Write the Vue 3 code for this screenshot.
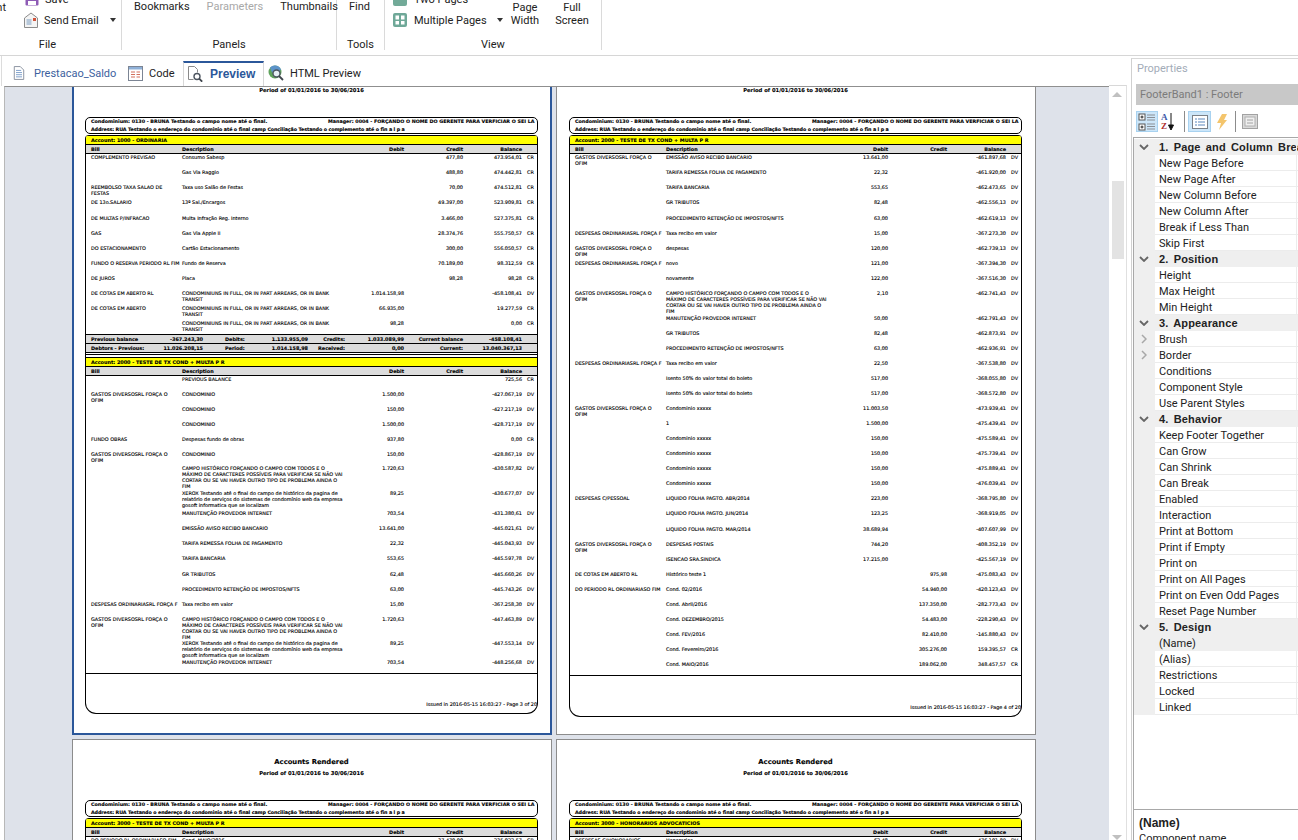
<template>
  <div class="app">
    <!-- ribbon, its upper part is cut off by the window -->
    <header class="ribbon">
      <section class="group group--file">
        <div class="group-body file-body">
          <span class="cut-print">Print</span>
          <div class="file-rows">
            <div class="tool tool--cut">
              <svg class="ico" viewBox="0 0 14 14"><rect x="0.5" y="0.5" width="13" height="13" rx="1" fill="#8e5bb5" /><rect x="3" y="9" width="8" height="4" fill="#fff" /></svg>
              <span>Save</span>
            </div>
            <div class="tool">
              <svg class="ico ico--mail" viewBox="0 0 16 16">
                <path d="M1.5 6 8 1l6.5 5v9.5h-13z" fill="#f4f4f4" stroke="#8c8c8c" />
                <path d="M3.5 8h5M3.5 10h5M3.5 12h5" stroke="#7a9cc0" />
                <rect x="10" y="6" width="3" height="3" fill="#d0523a" />
              </svg>
              <span>Send Email</span>
              <i class="caret"></i>
            </div>
          </div>
        </div>
        <div class="group-label">File</div>
      </section>

      <section class="group group--panels">
        <div class="group-body panel-tools">
          <span>Bookmarks</span>
          <span class="muted">Parameters</span>
          <span>Thumbnails</span>
        </div>
        <div class="group-label">Panels</div>
      </section>

      <section class="group group--tools">
        <div class="group-body panel-tools"><span>Find</span></div>
        <div class="group-label">Tools</div>
      </section>

      <section class="group group--view">
        <div class="group-body view-body">
          <div class="view-rows">
            <div class="tool tool--cut">
              <svg class="ico" viewBox="0 0 14 14"><rect width="14" height="14" rx="2" fill="#72aa98" /></svg>
              <span>Two Pages</span>
            </div>
            <div class="tool">
              <svg class="ico" viewBox="0 0 14 14">
                <rect width="14" height="14" rx="2" fill="#6fa898" />
                <path d="M2.5 2.5h3.5v4h-3.5zM8 2.5h3.5v4H8zM2.5 8H6v3.5H2.5zM8 8h3.5v3.5H8z" fill="#fff" />
              </svg>
              <span>Multiple Pages</span>
              <i class="caret caret--view"></i>
            </div>
          </div>
          <div class="stack stack--page">Page<br />Width</div>
          <div class="stack stack--full">Full<br />Screen</div>
        </div>
        <div class="group-label">View</div>
      </section>
    </header>

    <div class="workspace">
      <main class="main">
        <nav class="tabs">
          <div class="tab tab--file">
            <svg class="tab-ico" viewBox="0 0 14 16">
              <path d="M1.5.5h7l4 4v11h-11z" fill="#fff" stroke="#7c8594" />
              <path d="M3.5 5h6M3.5 7.5h7M3.5 10h7M3.5 12.5h7" stroke="#6d93c4" />
            </svg>
            <span>Prestacao_Saldo</span>
          </div>
          <div class="tab tab--code">
            <svg class="tab-ico tab-ico--code" viewBox="0 0 15 15">
              <rect x="0.5" y="0.5" width="14" height="14" fill="#fff" stroke="#7c8594" />
              <rect x="1" y="1" width="13" height="2.5" fill="#8eb0d8" />
              <path d="M3 6h4M8.5 6H12M3 8.500h4M8.500 8.500H12M3 11h4M8.500 11H12" stroke="#d2705c" />
            </svg>
            <span>Code</span>
          </div>
          <div class="tab tab--active">
            <svg class="tab-ico tab-ico--preview" viewBox="0 0 16 16">
              <path d="M1.500.5h6l3 3v3" fill="#fff" stroke="#8a8a8a" />
              <path d="M1.500.5v13h5" fill="none" stroke="#8a8a8a" />
              <circle cx="10" cy="10.500" r="3" fill="#fff" stroke="#4d5560" stroke-width="1.400" />
              <path d="m12.200 12.700 3 3" stroke="#3f454d" stroke-width="1.800" />
            </svg>
            <span>Preview</span>
          </div>
          <div class="tab tab--html">
            <svg class="tab-ico tab-ico--html" viewBox="0 0 16 16">
              <circle cx="7" cy="7" r="6.500" fill="#5fa35c" />
              <path d="M7 .5a6.500 6.500 0 0 1 6 4l-4 4-5-1-2-5A6.500 6.500 0 0 1 7 .5z" fill="#5c93c9" />
              <circle cx="8.500" cy="8.500" r="3.500" fill="#e6eef6" stroke="#4d5560" stroke-width="1.400" />
              <path d="m11 11 4 4" stroke="#3f454d" stroke-width="1.800" />
            </svg>
            <span>HTML Preview</span>
          </div>
        </nav>

        <div class="viewer">
          <div class="viewer-canvas">
            <div class="pages">
              <article
                v-for="page in pages"
                :key="page.no"
                class="page"
                :class="{ 'page--selected': page.selected }"
              >
                <div class="page-title">Accounts Rendered</div>
                <div class="page-period">Period of 01/01/2016 to 30/06/2016</div>

                <div class="info-box">
                  <div class="info-line">
                    <span class="info-cond">Condominium: 0130 - BRUNA Testando o campo nome até o final.</span>
                    <span class="info-manager">Manager: 0004 - FORÇANDO O NOME DO GERENTE PARA VERFICIAR O SEI LA</span>
                  </div>
                  <div class="info-line info-line--address">Address: RUA Testando o endereço do condominio até o final camp Conciliação Testando o complemento até o fin a l p a</div>
                </div>

                <div class="frame" :style="{ height: page.frameHeight + 'px' }">
                  <template v-for="(section, si) in page.sections" :key="si">
                    <div v-if="si > 0" class="section-rule"></div>
                    <div class="account">Account: {{ section.account }}</div>
                    <div class="grid-row grid-head">
                      <span>Bill</span>
                      <span>Description</span>
                      <span class="num">Debit</span>
                      <span class="num">Credit</span>
                      <span class="num">Balance</span>
                      <span></span>
                    </div>
                    <div
                      v-for="(row, ri) in section.rows"
                      :key="ri"
                      class="grid-row"
                      :style="{ height: (row[6] || 15) + 'px' }"
                    >
                      <span>{{ row[0] }}</span>
                      <span>{{ row[1] }}</span>
                      <span class="num">{{ row[2] }}</span>
                      <span class="num">{{ row[3] }}</span>
                      <span class="num">{{ row[4] }}</span>
                      <span class="sign">{{ row[5] }}</span>
                    </div>
                    <div v-if="section.summary" class="summary">
                      <div v-for="(line, li) in section.summary" :key="li" class="summary-line">
                        <span>{{ line[0] }}</span>
                        <span class="num">{{ line[1] }}</span>
                        <span class="summary-label">{{ line[2] }}</span>
                        <span class="num">{{ line[3] }}</span>
                        <span class="num">{{ line[4] }}</span>
                        <span class="num">{{ line[5] }}</span>
                        <span class="num">{{ line[6] }}</span>
                        <span class="num">{{ line[7] }}</span>
                      </div>
                    </div>
                  </template>
                  <div class="frame-footer">Issued in 2016-05-15 16:03:27 - Page {{ page.no }} of 20</div>
                </div>
              </article>
            </div>
          </div>
          <div class="scrollbar">
            <i class="arrow arrow--up"></i>
            <div class="thumb"></div>
            <i class="arrow arrow--down"></i>
          </div>
        </div>
      </main>

      <!-- properties panel -->
      <aside class="props">
        <div class="props-title">Properties</div>
        <div class="props-object">FooterBand1 : Footer</div>
        <div class="props-toolbar">
          <button class="tb tb--cat">
            <svg viewBox="0 0 20 20" width="20" height="20">
              <rect x="2" y="2" width="6" height="6" fill="#fff" stroke="#555" />
              <rect x="2" y="12" width="6" height="6" fill="#fff" stroke="#555" />
              <path d="M3.500 5h3M5 3.500v3M3.500 15h3M5 13.500v3" stroke="#222" />
              <path d="M10 3h8M10 5.500h8M10 8h8M10 12h8M10 14.500h8M10 17h8" stroke="#8a8f96" />
            </svg>
          </button>
          <div class="tb-az">
            <span class="az"><b class="az-a">A</b><b class="az-z">Z</b></span>
            <svg viewBox="0 0 6 18" width="6" height="18"><path d="M3 0v15M.5 12 3 17l2.500-5z" stroke="#111" fill="#111" /></svg>
          </div>
          <i class="tb-sep"></i>
          <button class="tb tb--list">
            <svg viewBox="0 0 16 14" width="16" height="14">
              <rect x="0.500" y="0.500" width="15" height="13" fill="#fff" stroke="#7a8088" />
              <path d="M3 4h2M6 4h7M3 7h2M6 7h7M3 10h2M6 10h7" stroke="#5a87bd" />
            </svg>
          </button>
          <svg class="tb-bolt" viewBox="0 0 12 16" width="12" height="16"><path d="M6 0h5L8 6h3l-8 10 2-7H1z" fill="#f4c56c" /></svg>
          <i class="tb-sep tb-sep--2"></i>
          <svg class="tb-events" viewBox="0 0 16 15" width="16" height="15">
            <rect x="0.500" y="0.500" width="15" height="14" fill="#d9d9d9" stroke="#a2a2a2" />
            <rect x="3" y="3" width="10" height="9" fill="#efefef" stroke="#b0b0b0" />
            <path d="M5 6h6M5 9h6" stroke="#a2a2a2" />
          </svg>
        </div>

        <div class="props-grid">
          <div
            v-for="item in propRows"
            :key="item.label"
            class="prop"
            :class="{ 'prop--cat': item.cat, 'prop--selected': item.label === '(Name)' }"
          >
            <div class="prop-gutter">
              <svg v-if="item.cat" viewBox="0 0 10 6" width="10" height="6"><path d="M1 1l4 4 4-4" fill="none" stroke="#666" stroke-width="1.800" /></svg>
              <svg v-else-if="item.more" viewBox="0 0 6 10" width="6" height="10"><path d="M1 1l4 4-4 4" fill="none" stroke="#a8a8a8" stroke-width="1.500" /></svg>
            </div>
            <div class="prop-name">{{ item.label }}</div>
            <div class="prop-value"></div>
          </div>
        </div>

        <div class="props-help">
          <b>(Name)</b>
          <div>Component name</div>
        </div>
      </aside>
    </div>
  </div>
</template>

<script setup>
const BILL_GASTOS = 'GASTOS DIVERSOSRL FORÇA O\nOFIM'
const BILL_DESP = 'DESPESAS ORDINARIASRL FORÇA F'
const CAMPO = 'CAMPO HISTÓRICO FORÇANDO O CAMPO COM TODOS E O\nMÁXIMO DE CARACTERES POSSÍVEIS PARA VERIFICAR SE NÃO VAI\nCORTAR OU SE VAI HAVER OUTRO TIPO DE PROBLEMA AINDA O\nFIM'
const XEROX = 'XEROX Testando até o final do campo de histórico da pagina de\nrelatório de serviços do sistemas de condomínio web da empresa\ngosoft informatica que se localizam'
const COND_IN = 'CONDOMINIUNS IN FULL, OR IN PART ARREARS, OR IN BANK\nTRANSIT'
const MANUT = 'MANUTENÇÃO PROVEDOR INTERNET'
const PROC = 'PROCEDIMENTO RETENÇÃO DE IMPOSTOS/NFTS'
const TAXA = 'Taxa recibo em valor'
const ISENTO = 'Isento 50% do valor total do boleto'
const XXXX = 'Condominio xxxxx'

// [bill, description, debit, credit, balance, sign, row height]
const pages = [
  {
    no: 3,
    selected: true,
    frameHeight: 579,
    sections: [
      {
        account: '1000 - ORDINARIA',
        rows: [
          ['COMPLEMENTO PREVISAO', 'Consumo Sabesp', '', '477,80', '473.954,01', 'CR'],
          ['', 'Gas Via Raggio', '', '488,80', '474.442,81', 'CR'],
          ['REEMBOLSO TAXA SALAO DE\nFESTAS', 'Taxa uso Salão de Festas', '', '70,00', '474.512,81', 'CR'],
          ['DE 13o.SALARIO', '13º Sal./Encargos', '', '49.397,00', '523.909,81', 'CR', 16],
          ['DE MULTAS P/INFRACAO', 'Multa Infração Reg. Interno', '', '3.466,00', '527.375,81', 'CR'],
          ['GAS', 'Gas Via Apple II', '', '28.374,76', '555.750,57', 'CR'],
          ['DO ESTACIONAMENTO', 'Cartão Estacionamento', '', '300,00', '556.050,57', 'CR'],
          ['FUNDO O RESERVA PERIODO RL FIM', 'Fundo de Reserva', '', '70.189,00', '98.312,59', 'CR'],
          ['DE JUROS', 'Placa', '', '98,28', '98,28', 'CR'],
          ['DE COTAS EM ABERTO RL', COND_IN, '1.014.158,98', '', '-458.108,41', 'DV'],
          ['DE COTAS EM ABERTO', COND_IN, '66.935,00', '', '19.277,59', 'CR'],
          ['', COND_IN, '98,28', '', '0,00', 'CR', 14]
        ],
        summary: [
          ['Previous balance', '-367.243,30', 'Debits:', '1.133.955,09', 'Credits:', '1.033.089,99', 'Current balance', '-458.108,41'],
          ['Debtors - Previous:', '11.026.208,15', 'Period:', '1.014.158,98', 'Received:', '0,00', 'Current:', '13.040.367,13']
        ]
      },
      {
        account: '2000 - TESTE DE TX COND + MULTA P R',
        rows: [
          ['', 'PREVIOUS BALANCE', '', '', '725,56', 'CR'],
          [BILL_GASTOS, 'CONDOMINIO', '1.500,00', '', '-427.067,19', 'DV'],
          ['', 'CONDOMINIO', '150,00', '', '-427.217,19', 'DV'],
          ['', 'CONDOMINIO', '1.500,00', '', '-428.717,19', 'DV'],
          ['FUNDO OBRAS', 'Despesas fundo de obras', '937,80', '', '0,00', 'CR'],
          [BILL_GASTOS, 'CONDOMINIO', '150,00', '', '-428.867,19', 'DV', 14],
          ['', CAMPO, '1.720,63', '', '-430.587,82', 'DV', 25],
          ['', XEROX, '89,25', '', '-430.677,07', 'DV', 20],
          ['', MANUT, '703,54', '', '-431.380,61', 'DV'],
          ['', 'EMISSÃO AVISO RECIBO BANCARIO', '13.641,00', '', '-445.021,61', 'DV'],
          ['', 'TARIFA REMESSA FOLHA DE PAGAMENTO', '22,32', '', '-445.043,93', 'DV'],
          ['', 'TARIFA BANCARIA', '553,65', '', '-445.597,78', 'DV', 16],
          ['', 'GR TRIBUTOS', '62,48', '', '-445.660,26', 'DV'],
          ['', PROC, '63,00', '', '-445.743,26', 'DV'],
          [BILL_DESP, TAXA, '15,00', '', '-367.258,30', 'DV'],
          [BILL_GASTOS, CAMPO, '1.720,63', '', '-447.463,89', 'DV', 24],
          ['', XEROX, '89,25', '', '-447.553,14', 'DV', 19],
          ['', MANUT, '703,54', '', '-448.256,68', 'DV', 14]
        ]
      }
    ]
  },
  {
    no: 4,
    frameHeight: 582,
    sections: [
      {
        account: '2000 - TESTE DE TX COND + MULTA P R',
        rows: [
          [BILL_GASTOS, 'EMISSÃO AVISO RECIBO BANCARIO', '13.641,00', '', '-461.897,68', 'DV'],
          ['', 'TARIFA REMESSA FOLHA DE PAGAMENTO', '22,32', '', '-461.920,00', 'DV'],
          ['', 'TARIFA BANCARIA', '553,65', '', '-462.473,65', 'DV'],
          ['', 'GR TRIBUTOS', '82,48', '', '-462.556,13', 'DV', 16],
          ['', PROC, '63,00', '', '-462.619,13', 'DV'],
          [BILL_DESP, TAXA, '15,00', '', '-367.273,30', 'DV'],
          [BILL_GASTOS, 'despesas', '120,00', '', '-462.739,13', 'DV'],
          [BILL_DESP, 'novo', '121,00', '', '-367.394,30', 'DV'],
          ['', 'novamente', '122,00', '', '-367.516,30', 'DV'],
          [BILL_GASTOS, CAMPO, '2,10', '', '-462.741,43', 'DV', 25],
          ['', MANUT, '50,00', '', '-462.791,43', 'DV'],
          ['', 'GR TRIBUTOS', '82,48', '', '-462.873,91', 'DV'],
          ['', PROC, '63,00', '', '-462.936,91', 'DV'],
          [BILL_DESP, TAXA, '22,50', '', '-367.538,80', 'DV'],
          ['', ISENTO, '517,00', '', '-368.055,80', 'DV'],
          ['', ISENTO, '517,00', '', '-368.572,80', 'DV'],
          [BILL_GASTOS, XXXX, '11.003,50', '', '-473.939,41', 'DV'],
          ['', '1', '1.500,00', '', '-475.439,41', 'DV'],
          ['', XXXX, '150,00', '', '-475.589,41', 'DV'],
          ['', XXXX, '150,00', '', '-475.739,41', 'DV'],
          ['', XXXX, '150,00', '', '-475.889,41', 'DV'],
          ['', XXXX, '150,00', '', '-476.039,41', 'DV'],
          ['DESPESAS C/PESSOAL', 'LIQUIDO FOLHA PAGTO. ABR/2014', '223,00', '', '-368.795,80', 'DV'],
          ['', 'LIQUIDO FOLHA PAGTO. JUN/2014', '123,25', '', '-368.919,05', 'DV', 16],
          ['', 'LIQUIDO FOLHA PAGTO. MAR/2014', '38.689,94', '', '-407.607,99', 'DV'],
          [BILL_GASTOS, 'DESPESAS POSTAIS', '744,20', '', '-408.352,19', 'DV'],
          ['', 'ISENCAO SRA.SINDICA', '17.215,00', '', '-425.567,19', 'DV'],
          ['DE COTAS EM ABERTO RL', 'Histórico teste 1', '', '975,98', '-475.083,43', 'DV'],
          ['DO PERIODO RL ORDINARIASO FIM', 'Cond. 02/2016', '', '54.940,00', '-420.123,43', 'DV'],
          ['', 'Cond. Abril/2016', '', '137.350,00', '-282.773,43', 'DV'],
          ['', 'Cond. DEZEMBRO/2015', '', '54.483,00', '-228.290,43', 'DV'],
          ['', 'Cond. FEV/2016', '', '82.410,00', '-145.880,43', 'DV'],
          ['', 'Cond. Fevereiro/2016', '', '305.276,00', '159.395,57', 'CR'],
          ['', 'Cond. MAIO/2016', '', '189.062,00', '348.457,57', 'CR', 14]
        ]
      }
    ]
  },
  {
    no: 5,
    frameHeight: 579,
    sections: [
      {
        account: '3000 - TESTE DE TX COND + MULTA P R',
        rows: [['DO PERIODO RL ORDINARIASO FIM', 'Cond. MAIO/2016', '', '37.470,00', '235.022,57', 'CR']]
      }
    ]
  },
  {
    no: 6,
    frameHeight: 579,
    sections: [
      {
        account: '3000 - HONORARIOS ADVOCATICIOS',
        rows: [['DESPESAS C/HONORARIOS', 'Honorarios', '62,48', '', '-476.101,89', 'DV']]
      }
    ]
  }
]

const cat = (label) => ({ label, cat: true })
const item = (label, more = false) => ({ label, more })

const propRows = [
  cat('1. Page and Column Break'),
  ...['New Page Before', 'New Page After', 'New Column Before', 'New Column After', 'Break if Less Than', 'Skip First'].map((l) => item(l)),
  cat('2. Position'),
  ...['Height', 'Max Height', 'Min Height'].map((l) => item(l)),
  cat('3. Appearance'),
  item('Brush', true),
  item('Border', true),
  ...['Conditions', 'Component Style', 'Use Parent Styles'].map((l) => item(l)),
  cat('4. Behavior'),
  ...['Keep Footer Together', 'Can Grow', 'Can Shrink', 'Can Break', 'Enabled', 'Interaction', 'Print at Bottom', 'Print if Empty', 'Print on', 'Print on All Pages', 'Print on Even Odd Pages', 'Reset Page Number'].map((l) => item(l)),
  cat('5. Design'),
  ...['(Name)', '(Alias)', 'Restrictions', 'Locked', 'Linked'].map((l) => item(l))
]
</script>

<style>
html,
body {
  margin: 0;
  background: #fff;
}
</style>

<style scoped>
.app {
  width: 1298px;
  height: 840px;
  overflow: hidden;
  display: flex;
  flex-direction: column;
  font-family: Roboto, "Liberation Sans", Arial, sans-serif;
  font-size: 11px;
  color: #222;
  background: #fff;
}

/* ribbon */
.ribbon {
  height: 55px;
  flex: none;
  display: flex;
  border-bottom: 1px solid #d6d6d6;
}
.group {
  height: 50px;
  flex: none;
  box-sizing: border-box;
  border-right: 1px solid #dadada;
  display: flex;
  flex-direction: column;
}
/* the File group starts left of the window */
.group--file { width: 148px; margin-left: -26px; }
.group--panels { width: 215px; }
.group--tools { width: 48px; }
.group--view { width: 217px; }
.group-body { flex: 1; min-height: 0; }
.group-label {
  height: 13px;
  line-height: 13px;
  text-align: center;
  position: relative;
  top: 1px;
}
.file-body { display: flex; }
.cut-print {
  width: 50px;
  flex: none;
  box-sizing: border-box;
  padding: 1px 0 0 9px;
  line-height: 14px;
}
.file-rows,
.view-rows {
  display: flex;
  flex-direction: column;
  gap: 5px;
  margin-top: -9px;
}
.tool {
  display: flex;
  align-items: center;
  height: 16px;
  gap: 5px;
  white-space: nowrap;
}
.ico { width: 14px; height: 14px; flex: none; }
.ico--mail { width: 16px; height: 16px; margin-left: -1px; }
.file-rows .tool--cut { padding-left: 1px; gap: 6px; }
.caret {
  display: block;
  width: 0;
  height: 0;
  margin-left: 6px;
  border-left: 3.5px solid transparent;
  border-right: 3.5px solid transparent;
  border-top: 4px solid #333;
}
.caret--view { margin-left: 3px; }
.panel-tools {
  display: flex;
  gap: 17px;
  padding: 0 12px;
  line-height: 14px;
}
.muted { color: #a8a8a8; }
.view-body { display: flex; padding-left: 8px; }
.view-rows { width: 112px; flex: none; }
.view-rows .tool { gap: 7px; }
.stack {
  text-align: center;
  line-height: 13px;
  padding-top: 1px;
}
.stack--page { margin-left: 5px; width: 30px; }
.stack--full { margin-left: 12px; width: 40px; }

/* workspace */
.workspace {
  flex: 1;
  min-height: 0;
  display: flex;
}
.main {
  width: 1131px;
  flex: none;
  display: flex;
  flex-direction: column;
}
.tabs {
  height: 30px;
  flex: none;
  display: flex;
  align-items: flex-end;
  border-left: 1px solid #dcdcdc;
  margin-left: 1px;
  box-sizing: border-box;
}
.tab {
  height: 25px;
  display: flex;
  align-items: center;
  box-sizing: border-box;
  padding-bottom: 1px;
  white-space: nowrap;
}
.tab-ico { width: 12px; height: 16px; flex: none; }
.tab--file { width: 126px; padding-left: 11px; gap: 9px; color: #3d5f9e; }
.tab--code { width: 55px; gap: 6px; }
.tab-ico--code { width: 15px; height: 15px; }
.tab--active {
  width: 81px;
  border-top: 2px solid #2b579a;
  border-left: 1px solid #d8d8d8;
  border-right: 1px solid #d8d8d8;
  padding-left: 3px;
  padding-bottom: 2px;
  gap: 7px;
  color: #2b579a;
  font-family: "Liberation Sans", Arial, sans-serif;
  font-size: 12px;
  font-weight: 700;
}
.tab-ico--preview { width: 16px; height: 16px; }
.tab--html { padding-left: 4px; gap: 6px; }
.tab-ico--html { width: 16px; height: 16px; }

.viewer {
  flex: 1;
  min-height: 0;
  display: flex;
}
.viewer-canvas {
  width: 1105px;
  margin-left: 4px;
  flex: none;
  overflow: hidden;
  background: #dee2ea;
  border-top: 1px solid #8f8f8f;
  border-left: 1px solid #b8b8b8;
  box-sizing: border-box;
}
.pages {
  display: grid;
  grid-template-columns: 480px 480px;
  gap: 4px;
  margin: -31px 0 0 67px;
}

/* one report page */
.page {
  height: 679px;
  box-sizing: border-box;
  background: #fff;
  outline: 1px solid #8c8c8c;
  outline-offset: -1px;
  padding: 18px 14px 0 13px;
  font-family: "DejaVu Sans", Verdana, sans-serif;
  font-size: 4.9px;
  line-height: 6px;
  color: #000;
  -webkit-text-stroke: 0.12px #000;
}
.page--selected {
  outline: 2px solid #2b579a;
  outline-offset: -2px;
}
.page-title {
  font-size: 6.8px;
  line-height: 10px;
  font-weight: 700;
  text-align: center;
}
.page-period {
  margin-top: 3px;
  font-size: 5.25px;
  line-height: 7px;
  font-weight: 700;
  text-align: center;
}
.info-box {
  margin-top: 23px;
  height: 17px;
  box-sizing: border-box;
  border: 1px solid #000;
  border-radius: 5px;
  padding: 0 0 0 5px;
  font-weight: 700;
  font-size: 4.8px;
  line-height: 8px;
  overflow: hidden;
  white-space: nowrap;
}
.info-line { display: flex; height: 8px; }
.info-line--address { letter-spacing: -0.1px; }
.info-cond { width: 237px; flex: none; }
.info-manager { flex: none; }

.frame {
  margin-top: 1px;
  box-sizing: border-box;
  border: 1px solid #000;
  border-top: 0;
  border-radius: 4px 4px 11px 11px;
  display: flex;
  flex-direction: column;
  overflow: hidden;
}
.account {
  height: 9px;
  flex: none;
  box-sizing: border-box;
  background: #ffff00;
  border-top: 1px solid #000;
  padding-left: 5px;
  font-weight: 700;
  line-height: 8px;
}
.section-rule {
  height: 1px;
  flex: none;
  margin: 1px 0 2px;
  background: #000;
}
.grid-row {
  flex: none;
  display: grid;
  grid-template-columns: 91px 158px 64px 59px 59px 14px;
  padding-left: 5px;
  white-space: pre;
  box-sizing: border-box;
  overflow: hidden;
}
.grid-head {
  height: 10px;
  background: #dcdcdc;
  border-top: 1px solid #000;
  border-bottom: 1px solid #000;
  font-weight: 700;
  line-height: 8px;
}
.num { text-align: right; }
.sign { padding-left: 5px; }

.summary {
  flex: none;
  border-top: 1px solid #000;
  border-bottom: 1px solid #000;
  background: #dcdcdc;
  font-weight: 700;
}
.summary-line {
  display: grid;
  grid-template-columns: 59px 53px 57px 48px 37px 59px 59px 59px;
  height: 8px;
  box-sizing: border-box;
  padding-left: 5px;
  line-height: 8px;
  white-space: nowrap;
}
.summary-line + .summary-line {
  height: 9px;
  border-top: 1px solid #000;
}
.summary-label { padding-left: 22px; }

.frame-footer {
  flex: 1;
  min-height: 0;
  border-top: 1px solid #000;
  white-space: nowrap;
  padding-bottom: 6px;
  display: flex;
  align-items: flex-end;
  justify-content: flex-end;
}

/* scrollbar next to the pages */
.scrollbar {
  width: 18px;
  flex: none;
  box-sizing: border-box;
  border-top: 1px solid #d8d8d8;
  border-right: 1px solid #e0e0e0;
  margin-top: -1px;
  position: relative;
  padding-left: 3px;
}
.thumb {
  width: 12px;
  height: 78px;
  margin-top: 95px;
  background: #e3e3e3;
}
.arrow {
  position: absolute;
  left: 3px;
  width: 0;
  height: 0;
  border-left: 5px solid transparent;
  border-right: 5px solid transparent;
}
.arrow--up { top: 6px; border-bottom: 5px solid #c0c0c0; }
.arrow--down { bottom: 0; border-top: 5px solid #c0c0c0; }

/* properties */
.props {
  flex: 1;
  min-width: 0;
  margin-top: 2px;
  border-top: 1px solid #d8d8d8;
  border-left: 1px solid #d0d0d0;
  box-sizing: border-box;
  display: flex;
  flex-direction: column;
  overflow: hidden;
}
.props-title {
  height: 25px;
  line-height: 19px;
  padding-left: 5px;
  flex: none;
  color: #a3acb8;
}
.props-object {
  height: 21px;
  flex: none;
  margin-left: 4px;
  background: #c8c8c8;
  color: #7b7b7b;
  line-height: 22px;
  padding-left: 4px;
  white-space: nowrap;
}
.props-toolbar {
  height: 32px;
  flex: none;
  display: flex;
  align-items: center;
  padding: 1px 0 0 4px;
  box-sizing: border-box;
}
.tb {
  padding: 0;
  margin: 0;
  border: 1px solid #a8d2f0;
  background: #cce6f9;
  display: flex;
  align-items: center;
  justify-content: center;
  height: 21px;
  box-sizing: border-box;
}
.tb--cat { width: 22px; }
.tb--list { width: 23px; margin-left: 3px; }
.tb-az {
  display: flex;
  align-items: center;
  margin-left: 3px;
  width: 19px;
}
.az {
  display: flex;
  flex-direction: column;
  font-size: 9px;
  line-height: 9px;
  font-family: "Liberation Serif", serif;
}
.az-a { color: #3a57a8; }
.az-z { color: #b03030; }
.tb-sep {
  width: 1px;
  height: 21px;
  background: #8c8c8c;
  margin-left: 4px;
}
.tb-bolt { margin-left: 5px; }
.tb-sep--2 { margin-left: 7px; }
.tb-events { margin-left: 6px; }

.props-grid {
  flex: 1;
  min-height: 0;
  margin-left: 1px;
  border-top: 1px solid #a8a8a8;
  border-left: 1px solid #a8a8a8;
  border-bottom: 1px solid #a8a8a8;
  padding-top: 1px;
  overflow: hidden;
}
.prop {
  height: 16px;
  display: flex;
  white-space: nowrap;
  box-sizing: border-box;
}
.prop-gutter {
  width: 21px;
  flex: none;
  background: #efefef;
  display: flex;
  align-items: center;
  justify-content: center;
  padding-right: 2px;
  box-sizing: border-box;
}
.prop-name {
  width: 141px;
  flex: none;
  padding-left: 4px;
  box-sizing: border-box;
  line-height: 18px;
  border-bottom: 1px solid #ececec;
  overflow: hidden;
}
.prop-value {
  flex: 1;
  border-left: 1px solid #ececec;
  border-bottom: 1px solid #ececec;
}
.prop--cat { background: #efefef; }
.prop--cat .prop-name,
.prop--cat .prop-value {
  border-color: #efefef;
}
.prop--cat .prop-name {
  overflow: visible;
  line-height: 16px;
  font-family: "Liberation Sans", Arial, sans-serif;
  font-size: 11px;
  font-weight: 700;
  letter-spacing: 0.15px;
  word-spacing: 2px;
}
.prop--selected .prop-name,
.prop--selected .prop-value {
  background: #efefef;
  border-color: #efefef;
}
.props-help {
  height: 30px;
  flex: none;
  box-sizing: border-box;
  margin-left: 1px;
  padding: 6px 0 0 5px;
  border-left: 1px solid #a8a8a8;
  line-height: 15px;
  white-space: nowrap;
}
.props-help b {
  font-family: "Liberation Sans", Arial, sans-serif;
  font-size: 12px;
}
</style>
